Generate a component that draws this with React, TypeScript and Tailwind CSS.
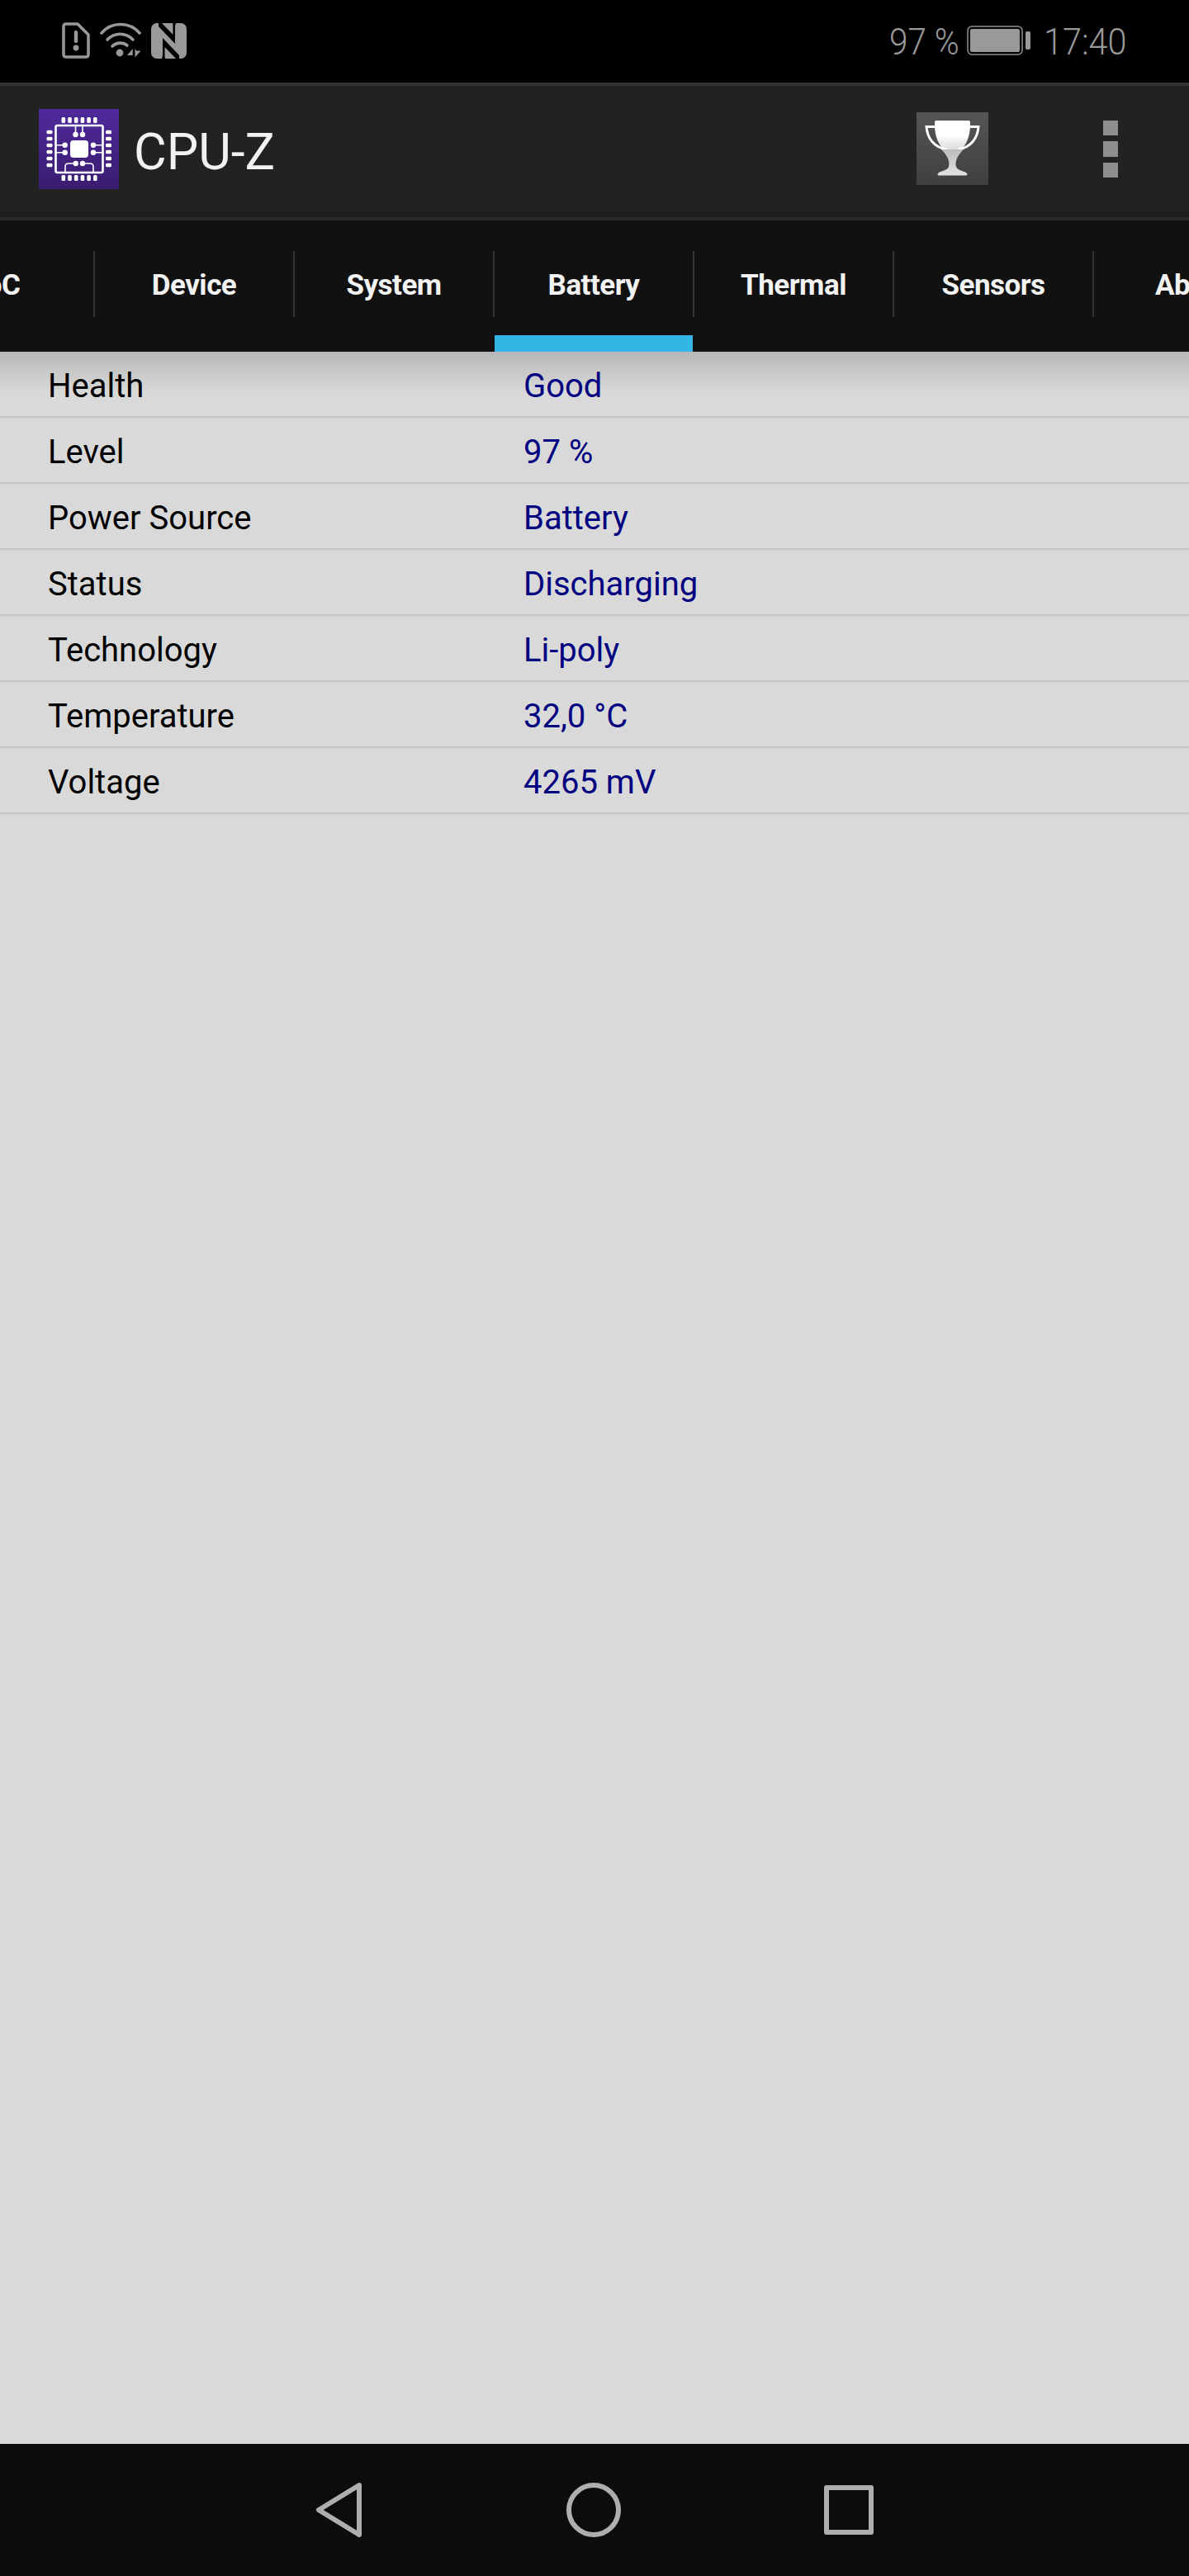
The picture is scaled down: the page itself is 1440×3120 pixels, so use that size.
const tabs = ['SoC', 'Device', 'System', 'Battery', 'Thermal', 'Sensors', 'About'];

const rows = [
  { label: 'Health', value: 'Good' },
  { label: 'Level', value: '97 %' },
  { label: 'Power Source', value: 'Battery' },
  { label: 'Status', value: 'Discharging' },
  { label: 'Technology', value: 'Li-poly' },
  { label: 'Temperature', value: '32,0 °C' },
  { label: 'Voltage', value: '4265 mV' },
];

const pinSteps = [0, 1, 2, 3, 4, 5];

const SimAlert = () => (
  <svg width="34" height="44" viewBox="0 0 34 44" className="shrink-0">
    <path d="M5 2 H19 L32 15 V39 Q32 42 29 42 H5 Q2 42 2 39 V5 Q2 2 5 2 Z" fill="none" stroke="#999999" strokeWidth="3.5" strokeLinejoin="round" />
    <rect x="14.8" y="10" width="4.4" height="15" rx="2" fill="#999999" />
    <circle cx="17" cy="31" r="3.4" fill="#999999" />
  </svg>
);

const Wifi = () => (
  <svg width="50" height="44" viewBox="0 0 50 44" className="shrink-0">
    <g fill="none" stroke="#999999" strokeWidth="3.6" strokeLinecap="round">
      <path d="M2 13 C14 -1 36 -1 48 13" />
      <path d="M9 21 C18 12 31 12 40 21" />
      <path d="M15 29 C20 24 28 24 33 28" />
    </g>
    <circle cx="24" cy="37" r="4.4" fill="#999999" />
    <path d="M33 40 L39.7 32 V40 Z M42.5 31.5 L44 34.5 H49.5 L42.5 42.5 Z" fill="#999999" />
  </svg>
);

const Nfc = () => (
  <svg width="43" height="43" viewBox="0 0 43 43" className="shrink-0">
    <rect x="0" y="0" width="43" height="43" rx="7" fill="#999999" />
    <path id="nfcSlit" d="M9 0 H13 L26.5 14 V4 Q26.5 1.5 26 0 H30 Q29 2 29 6 V25 L9 4 Z" fill="#000000" />
    <path d="M9 0 H13 L26.5 14 V4 Q26.5 1.5 26 0 H30 Q29 2 29 6 V25 L9 4 Z" transform="rotate(180 21.5 21.5)" fill="#000000" />
  </svg>
);

const BatteryIcon = () => (
  <svg width="78" height="37" viewBox="0 0 78 37" className="shrink-0">
    <rect x="1" y="1" width="66" height="34" rx="5" fill="none" stroke="#8f8f8f" strokeWidth="1.5" />
    <rect x="4" y="4" width="60" height="28" rx="2.5" fill="#999999" />
    <rect x="71" y="7" width="6" height="22" rx="2" fill="#999999" />
  </svg>
);

const CpuLogo = () => (
  <svg width="97" height="97" viewBox="0 0 97 97" className="shrink-0">
    <defs>
      <linearGradient id="logoBg" x1="0" y1="0" x2="0" y2="1">
        <stop offset="0" stopColor="#4f2a9c" />
        <stop offset="1" stopColor="#391c6f" />
      </linearGradient>
    </defs>
    <rect width="97" height="97" fill="url(#logoBg)" />
    <g fill="#ffffff">
      {pinSteps.map((i) => (
        <g key={i}>
          <rect x={27.5 + i * 7.7} y="10" width="4.6" height="7" rx="1.5" />
          <rect x={27.5 + i * 7.7} y="80" width="4.6" height="7" rx="1.5" />
          <rect x="9.5" y={25.7 + i * 8} width="7" height="4.6" rx="1.5" />
          <rect x="81" y={25.7 + i * 8} width="7" height="4.6" rx="1.5" />
        </g>
      ))}
      <rect x="38" y="38" width="22" height="21" rx="4" />
      <circle cx="44.5" cy="31" r="3.2" />
      <circle cx="53" cy="31" r="3.2" />
      <circle cx="31.7" cy="43.7" r="3.2" />
      <circle cx="31.7" cy="52.7" r="3.2" />
      <circle cx="66" cy="43.7" r="3.2" />
      <circle cx="66" cy="52.7" r="3.2" />
      <circle cx="44.7" cy="66" r="3.2" />
      <circle cx="53" cy="66" r="3.2" />
    </g>
    <g fill="none" stroke="#ffffff">
      <rect x="20.5" y="20" width="57" height="57" rx="2" strokeWidth="2.6" />
      <path d="M44.5 31 V20 M53 31 V20 M31.7 43.7 H20 M31.7 52.7 H20 M66 43.7 H78 M66 52.7 H78" strokeWidth="1.6" />
      <path d="M44.7 66 H36 Q32 66 32 70 V77 M53 66 H62 Q66 66 66 70 V77" strokeWidth="1.6" />
    </g>
  </svg>
);

const Trophy = () => (
  <svg width="87" height="88" viewBox="0 0 87 88">
    <defs>
      <linearGradient id="cupFill" x1="0" y1="0" x2="0" y2="1">
        <stop offset="0" stopColor="#ffffff" />
        <stop offset="0.5" stopColor="#ffffff" />
        <stop offset="1" stopColor="#dcdcdc" />
      </linearGradient>
      <linearGradient id="stemFill" x1="0" y1="0" x2="0" y2="1">
        <stop offset="0" stopColor="#bcbcbc" />
        <stop offset="1" stopColor="#e2e2e2" />
      </linearGradient>
    </defs>
    <path d="M22 12 Q22 10 24 10 H63 Q65 10 65 12 V16 C65 29 60 40 54 45 H33 C27 40 22 29 22 16 Z" fill="url(#cupFill)" />
    <path d="M22 17.5 H12 C13 31 21 43 37 45 M65 17.5 H75 C74 31 66 43 50 45" fill="none" stroke="#ffffff" strokeWidth="3" />
    <path d="M30 45 H57 C51 51 46 58 48 66 C49 70 57 71 60 73 Q63 76 60 76.5 H27 Q24 76 27 73 C30 71 38 70 39 66 C41 58 36 51 30 45 Z" fill="url(#stemFill)" />
  </svg>
);

const BackIcon = () => (
  <svg width="58" height="68" viewBox="0 0 58 68">
    <path d="M53 4 L4 34 L53 64 Z" fill="none" stroke="#aeaeae" strokeWidth="6" strokeLinejoin="round" />
  </svg>
);

export default function App() {
  return (
    <div className="flex h-[3120px] w-[1440px] flex-col overflow-hidden bg-[#d9d9d9] font-['Roboto',sans-serif]">
      {/* Status bar */}
      <div className="flex h-[100px] shrink-0 items-center justify-between bg-black pb-[2px] pl-[75px] pr-[77px]">
        <div className="flex items-center gap-[12px]">
          <SimAlert />
          <Wifi />
          <Nfc />
        </div>
        <div className="flex items-center text-[#999999]">
          <span className="w-[94px] origin-left scale-x-[0.9] whitespace-nowrap pt-[2px] text-[45px] font-light leading-none">97 %</span>
          <BatteryIcon />
          <span className="ml-[15px] w-[99px] origin-left scale-x-[0.92] whitespace-nowrap pt-[2px] text-[45px] font-light leading-none">17:40</span>
        </div>
      </div>

      {/* App bar */}
      <div className="flex h-[156px] shrink-0 items-center justify-between border-t-[4px] border-[#333333] bg-[#222222] pl-[47px] pr-[86px]">
        <div className="flex items-center gap-[18px]">
          <CpuLogo />
          <span className="pt-[8px] text-[61px] leading-none text-[#f2f2f2]">CPU-Z</span>
        </div>
        <div className="flex items-center gap-[139px]">
          <div className="flex h-[88px] w-[87px] bg-gradient-to-b from-[#555555] to-[#404040]">
            <Trophy />
          </div>
          <div className="flex flex-col gap-[7px]">
            <div className="h-[18px] w-[18px] bg-[#8e8e8e]" />
            <div className="h-[19px] w-[18px] bg-[#8e8e8e]" />
            <div className="h-[18px] w-[18px] bg-[#8e8e8e]" />
          </div>
        </div>
      </div>

      {/* Tabs */}
      <div className="h-[7px] shrink-0 bg-[#1d1d1d]" />
      <div className="h-[4px] shrink-0 bg-[#2b2b2b]" />
      <div className="flex h-[159px] shrink-0 overflow-hidden bg-[#111111]">
        <div className="-ml-[127px] flex">
          {tabs.map((tab) => (
            <div key={tab} className="flex w-[242px] shrink-0">
              <div className="flex w-[240px] flex-col">
                <div className="flex h-[139px] items-center justify-center pt-[17px] text-[35px] font-bold leading-none tracking-[-0.5px] text-[#f2f2f2]">
                  {tab}
                </div>
                {tab === 'Battery' ? <div className="h-[20px] bg-[#33b5e5]" /> : null}
              </div>
              <div className="mt-[37px] h-[80px] w-[2px] bg-[#333333]" />
            </div>
          ))}
        </div>
      </div>

      {/* Battery info */}
      <div className="relative flex-1">
        <div className="absolute inset-x-0 top-0 h-[50px] bg-gradient-to-b from-[#b8b8b8] to-[#d9d9d900]" />
        <div className="relative flex flex-col">
          {rows.map((row) => (
            <div key={row.label} className="flex h-[80px] items-center border-b-[2px] border-[#c4c4c4] pl-[58px] pt-[5px] text-[40px] leading-none">
              <span className="w-[576px] text-black">{row.label}</span>
              <span className="text-[#000080]">{row.value}</span>
            </div>
          ))}
        </div>
      </div>

      {/* Navigation bar */}
      <div className="flex h-[160px] shrink-0 items-center justify-center gap-[246px] bg-[#0c0c0c]">
        <BackIcon />
        <div className="h-[66px] w-[66px] rounded-full border-[6px] border-[#aeaeae]" />
        <div className="h-[60px] w-[60px] rounded-[3px] border-[6px] border-[#aeaeae]" />
      </div>
    </div>
  );
}
